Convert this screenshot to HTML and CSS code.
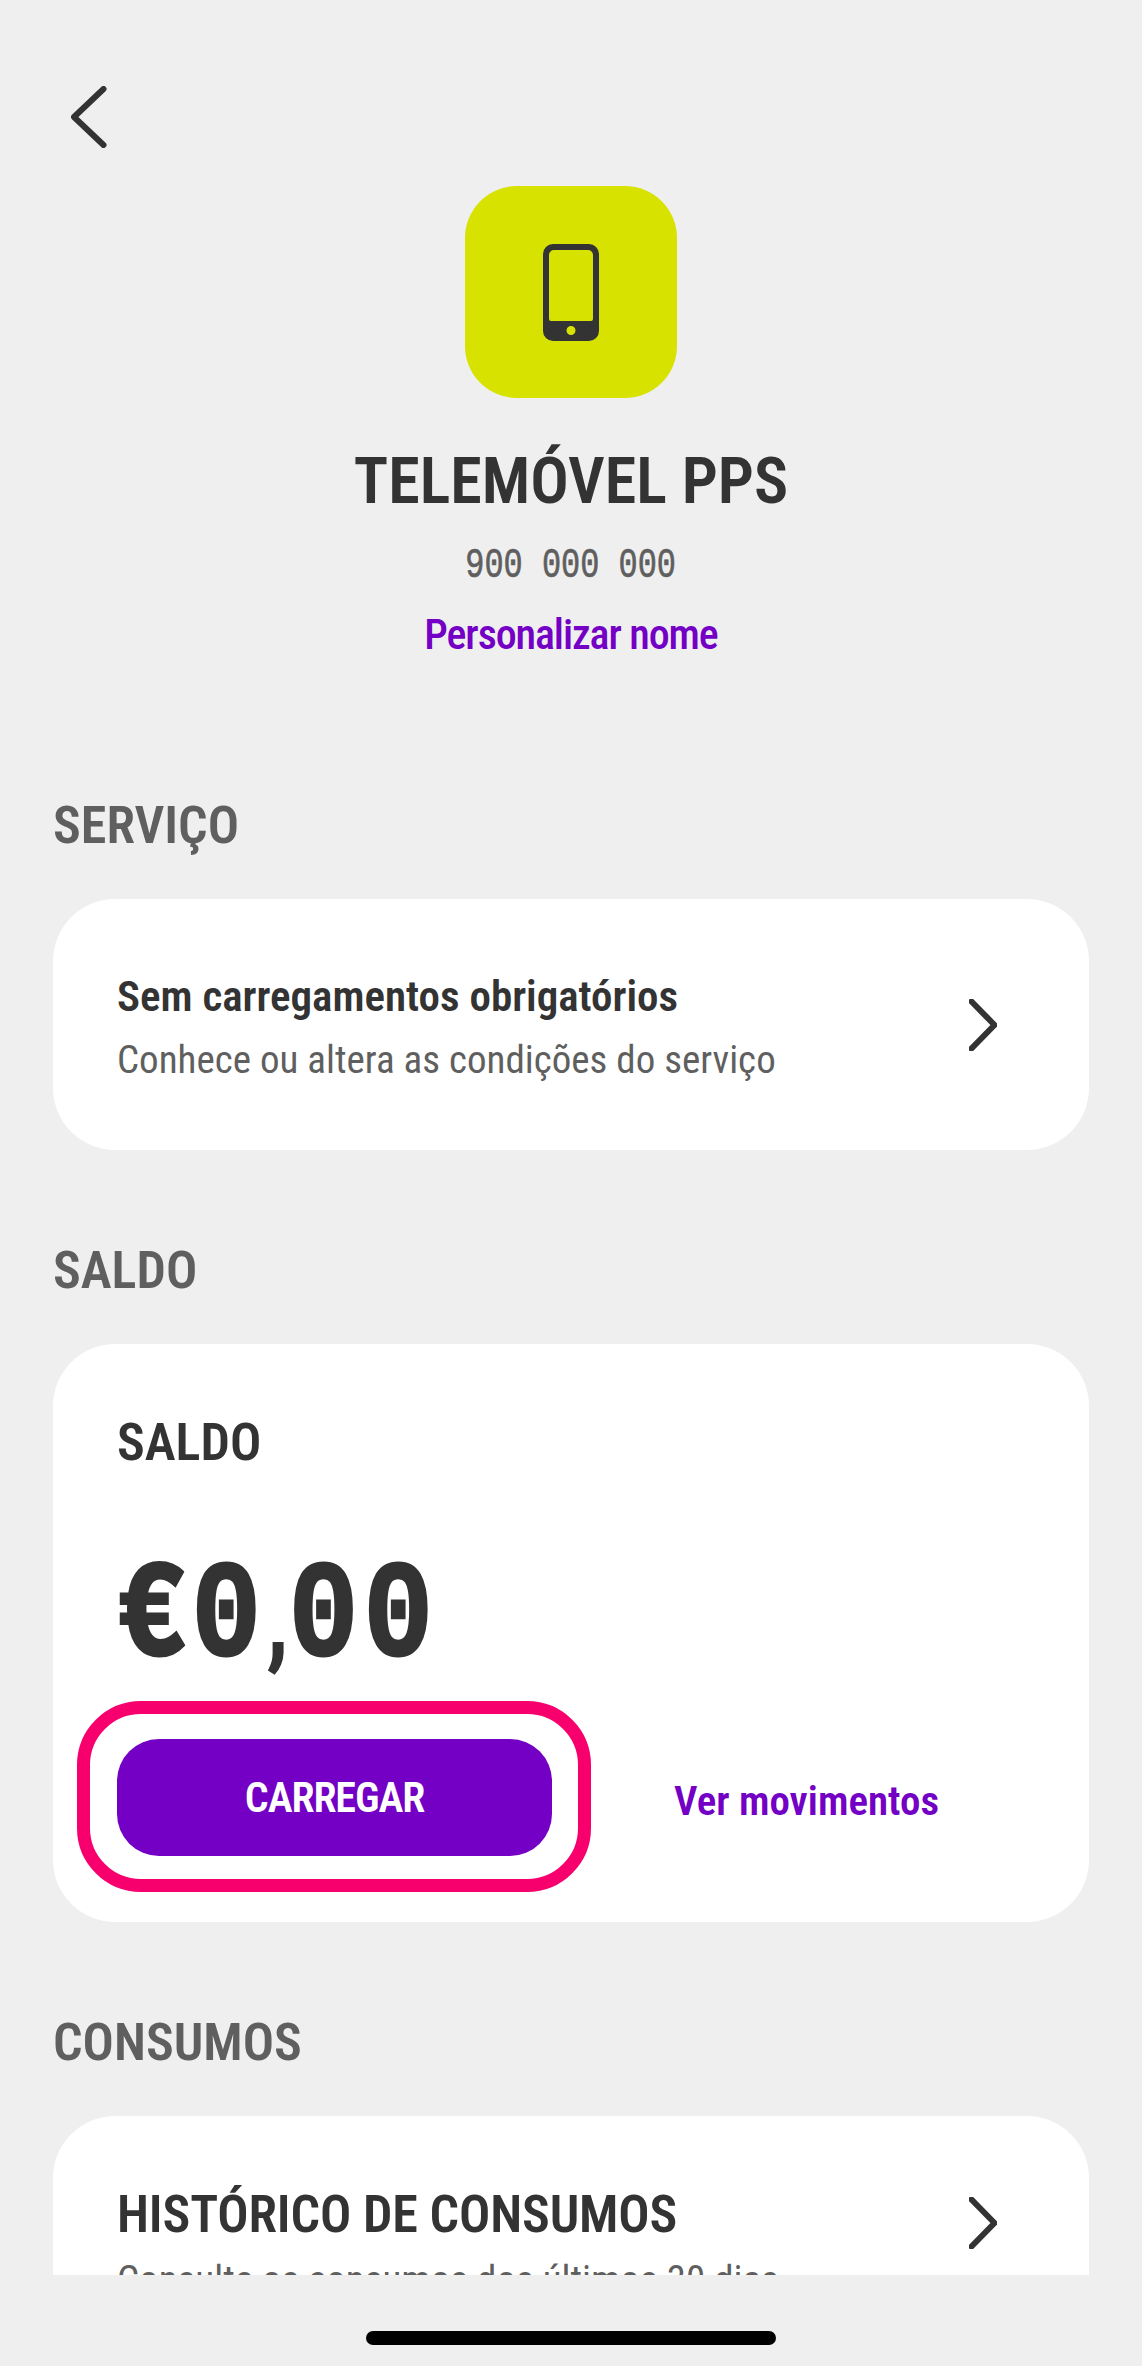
FILE: index.html
```html
<!DOCTYPE html>
<html lang="pt">
<head>
    <meta charset="UTF-8">
    <meta name="viewport" content="width=device-width, initial-scale=1.0">
    <title>Telemóvel PPS</title>
    <link rel="stylesheet" href="styles.css">
</head>
<body>
    <div class="screen">
        <div class="content">
            <div class="topbar">
                <svg class="back" width="36" height="62" viewBox="0 0 36 62">
                    <path d="M32.5 3 L3 31 L32.5 59"/>
                </svg>
            </div>

            <div class="profile">
                <div class="profile-icon">
                    <svg width="56" height="97" viewBox="0 0 56 97">
                        <path fill-rule="evenodd" d="M10 0h36a10 10 0 0 1 10 10v77a10 10 0 0 1-10 10H10A10 10 0 0 1 0 87V10A10 10 0 0 1 10 0zM11 6a5 5 0 0 0-5 5v64a2 2 0 0 0 2 2h40a2 2 0 0 0 2-2V11a5 5 0 0 0-5-5zM28 82a4.5 4.5 0 1 0 0 9a4.5 4.5 0 0 0 0-9z"/>
                    </svg>
                </div>
                <h1>TELEMÓVEL PPS</h1>
                <div class="number">900 000 000</div>
                <a class="custom-name" href="#">Personalizar nome</a>
            </div>

            <h2 class="section-title section-service">SERVIÇO</h2>
            <div class="card card-row card-service">
                <div class="row-text">
                    <div class="row-title">Sem carregamentos obrigatórios</div>
                    <div class="row-sub">Conhece ou altera as condições do serviço</div>
                </div>
                <svg class="chevron" width="28" height="52" viewBox="0 0 28 52">
                    <path d="M2.5 2.5 L25.5 26 L2.5 49.5"/>
                </svg>
            </div>

            <h2 class="section-title section-balance">SALDO</h2>
            <div class="card card-balance">
                <div class="balance-label">SALDO</div>
                <div class="balance-value">€0<span class="comma">,</span>00</div>
                <div class="balance-actions">
                    <button class="btn-topup">CARREGAR</button>
                    <a class="movements" href="#">Ver movimentos</a>
                </div>
            </div>

            <h2 class="section-title section-usage">CONSUMOS</h2>
            <div class="card card-row card-usage">
                <div class="row-text">
                    <div class="usage-title">HISTÓRICO DE CONSUMOS</div>
                    <div class="row-sub">Consulte os consumos dos últimos 30 dias</div>
                </div>
                <svg class="chevron" width="28" height="52" viewBox="0 0 28 52">
                    <path d="M2.5 2.5 L25.5 26 L2.5 49.5"/>
                </svg>
            </div>
        </div>
        <div class="home-area">
            <div class="home-bar"></div>
        </div>
    </div>
</body>
</html>
```
FILE: styles.css
```css
:root {
    --bg: #efefef;
    --dark: #333333;
    --gray: #5f5f5f;
    --purple: #7300c4;
    --lime: #d8e200;
    --pink: #f7006e;
}

* {
    box-sizing: border-box;
}

body {
    margin: 0;
    background: var(--bg);
    color: var(--dark);
    font-family: Roboto, "Open Sans", sans-serif;
    font-stretch: 75%;
}

.screen {
    width: 1142px;
    height: 2366px;
    display: flex;
    flex-direction: column;
    overflow: hidden;
}

.content {
    height: 2275px;
    flex: none;
    overflow: hidden;
    padding: 0 53px;
}

.topbar {
    height: 186px;
    padding: 86px 0 0 18px;
}

.back {
    display: block;
}

.back path,
.chevron path {
    fill: none;
    stroke: var(--dark);
    stroke-width: 6;
    stroke-linecap: round;
    stroke-linejoin: round;
}

.profile {
    display: flex;
    flex-direction: column;
    align-items: center;
}

.profile-icon {
    width: 212px;
    height: 212px;
    border-radius: 52px;
    background: var(--lime);
    display: flex;
    align-items: center;
    justify-content: center;
}

.profile-icon svg {
    fill: var(--dark);
}

h1 {
    margin: 47px 0 0;
    font-size: 64px;
    line-height: 74px;
    font-weight: 600;
    font-stretch: 79%;
}

.number {
    margin-top: 25px;
    font-family: "Liberation Mono", monospace;
    font-size: 42px;
    line-height: 44px;
    color: var(--gray);
    -webkit-text-stroke: 0.7px var(--gray);
    transform: scaleX(0.76);
}

.custom-name {
    margin-top: 22px;
    font-size: 42px;
    line-height: 50px;
    font-weight: 500;
    letter-spacing: -1.1px;
    color: var(--purple);
    text-decoration: none;
}

.section-title {
    margin: 0;
    font-size: 52px;
    line-height: 60px;
    font-weight: 600;
    color: var(--gray);
}

.section-service {
    margin-top: 136px;
}

.section-balance {
    margin-top: 91px;
}

.section-usage {
    margin-top: 91px;
}

.card {
    background: #ffffff;
    border-radius: 62px;
    padding: 0 64px;
}

.card-row {
    display: flex;
    align-items: center;
    justify-content: space-between;
}

.card-service {
    margin-top: 43px;
    height: 251px;
    padding-right: 92px;
}

.row-title {
    margin-top: 5px;
    font-size: 43px;
    line-height: 52px;
    font-weight: 600;
}

.row-sub {
    margin-top: 10px;
    font-size: 39px;
    line-height: 50px;
    color: var(--gray);
}

.card-service .row-sub {
    margin-top: 13px;
}

.card-balance {
    margin-top: 43px;
    height: 578px;
    padding-top: 69px;
}

.balance-label {
    font-size: 52px;
    line-height: 60px;
    font-weight: 600;
}

.balance-value {
    margin-top: 80px;
    font-family: "Liberation Mono", monospace;
    font-size: 138px;
    line-height: 130px;
    font-weight: 700;
    letter-spacing: 6px;
    -webkit-text-stroke: 3px var(--dark);
    white-space: nowrap;
    transform: scaleX(0.84);
    transform-origin: left center;
}

.comma {
    font-family: Roboto, sans-serif;
    font-size: 110px;
    letter-spacing: 0;
    -webkit-text-stroke: 0;
}

.balance-actions {
    margin-top: 56px;
    display: flex;
    align-items: center;
}

.btn-topup {
    position: relative;
    width: 435px;
    height: 117px;
    border: none;
    border-radius: 42px;
    background: var(--purple);
    color: #ffffff;
    font-family: inherit;
    font-stretch: inherit;
    font-size: 42px;
    font-weight: 600;
    letter-spacing: -1.1px;
}

/* highlight ring drawn over the card */
.btn-topup::after {
    content: "";
    position: absolute;
    inset: -38px -39px -36px -40px;
    border: 13px solid var(--pink);
    border-radius: 64px;
}

.movements {
    margin: 7px 0 0 122px;
    font-size: 41px;
    font-weight: 600;
    color: var(--purple);
    text-decoration: none;
}

.card-usage {
    margin-top: 43px;
    height: 250px;
    padding-right: 92px;
    align-items: flex-start;
    padding-top: 69px;
}

.usage-title {
    font-size: 52px;
    line-height: 60px;
    font-weight: 600;
    letter-spacing: -0.15px;
}

.card-usage .chevron {
    margin-top: 12px;
}

.home-area {
    flex: 1;
    padding-top: 56px;
}

.home-bar {
    width: 410px;
    height: 14px;
    margin: 0 auto;
    border-radius: 7px;
    background: #000000;
}
```
